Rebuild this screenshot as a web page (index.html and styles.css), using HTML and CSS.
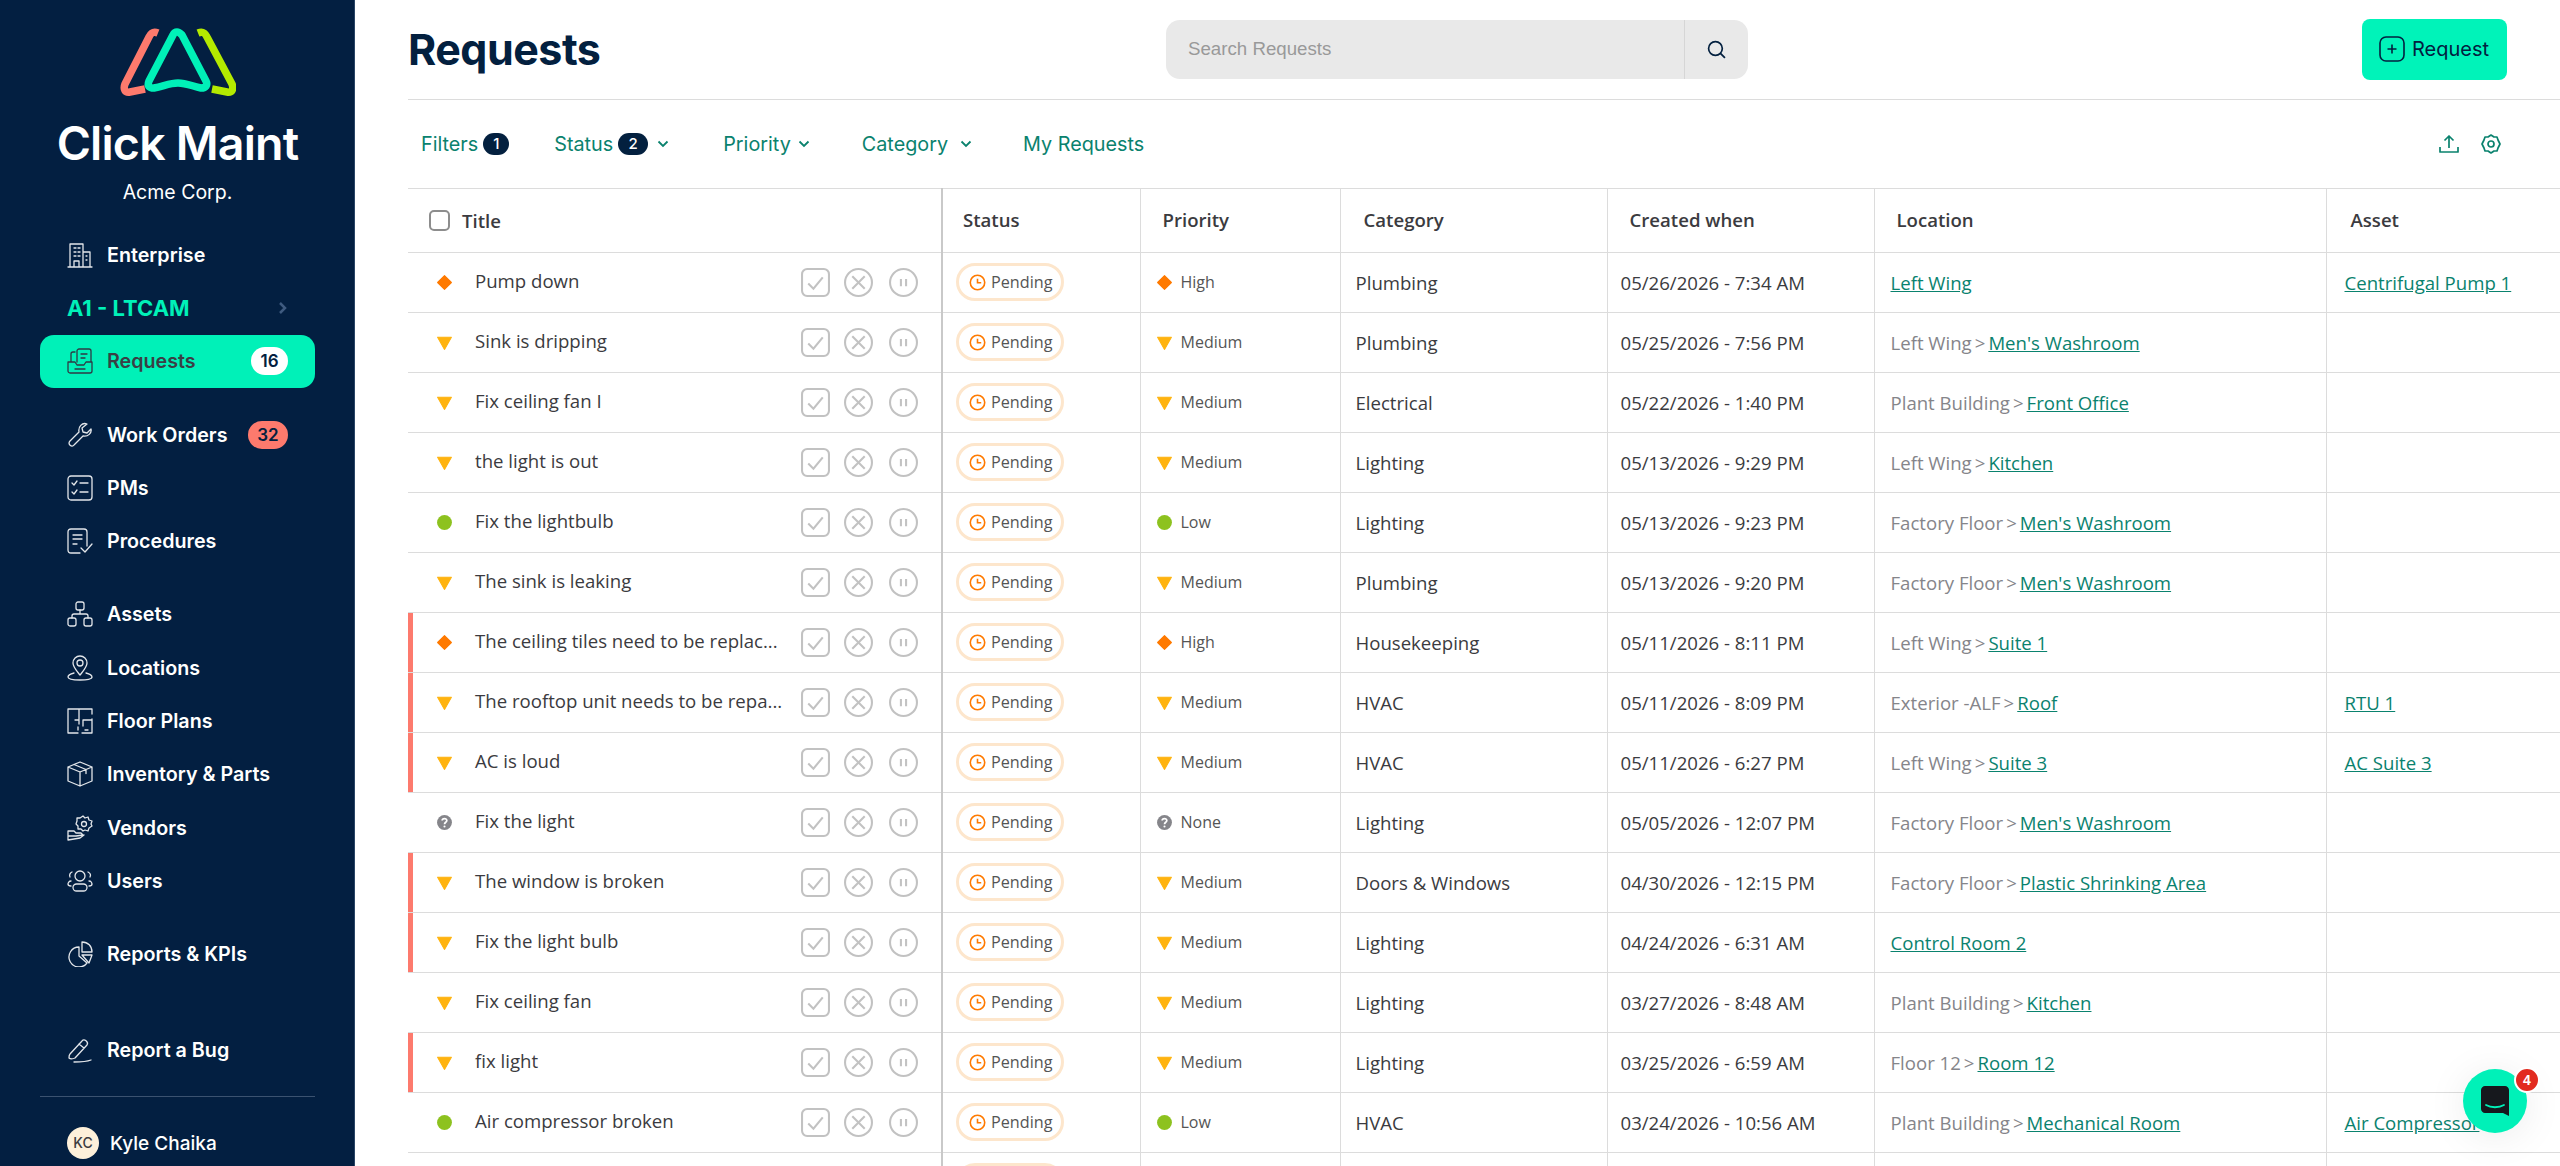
FILE: index.html
```html
<!DOCTYPE html>
<html lang="en">
<head>
  <meta charset="UTF-8">
  <meta name="viewport" content="width=device-width, initial-scale=1.0">
  <title>Requests - Click Maint</title>
  <link rel="stylesheet" href="styles.css">
</head>
<body>
  <svg class="sprites" width="0" height="0">
    <symbol id="i-check" viewBox="0 0 28 28"><rect x="1" y="1" width="26" height="26" rx="5"/><path d="M7 15l5 5 9-11"/></symbol>
    <symbol id="i-cross" viewBox="0 0 28 28"><circle cx="14" cy="14" r="13"/><path d="M8 8l12 12M20 8L8 20"/></symbol>
    <symbol id="i-pause" viewBox="0 0 28 28"><circle cx="14" cy="14" r="13"/><path d="M11.5 10.5v7M16.5 10.5v7"/></symbol>
    <symbol id="i-clock" viewBox="0 0 16 16"><circle cx="8" cy="8" r="6.8"/><path d="M8 4.5V8.3H11.5"/></symbol>
    <symbol id="p-high" viewBox="0 0 16 16"><path d="M8 1.5l6.5 6.5L8 14.5 1.500 8z" fill="#ff7a00" stroke="#ff7a00" stroke-linejoin="round"/></symbol>
    <symbol id="p-medium" viewBox="0 0 16 16"><path d="M1.500 3h13L8 14.500z" fill="#ffb30f" stroke="#ffb30f" stroke-linejoin="round"/></symbol>
    <symbol id="p-low" viewBox="0 0 16 16"><circle cx="8" cy="8" r="7" fill="#8dc21f"/></symbol>
    <symbol id="p-none" viewBox="0 0 16 16"><circle cx="8" cy="8" r="7" fill="#85858a"/><path d="M5.800 6.200C5.900 3.700 10.200 3.700 10.200 6.200 10.200 7.800 8 7.800 8 9.600" fill="none" stroke="#fff" stroke-width="1.600"/><circle cx="8" cy="11.800" r="1" fill="#fff"/></symbol>
  </svg>

  <div class="app">
    <aside class="sidebar">
      <div class="brand">
        <svg class="logo" viewBox="0 0 116 72" fill="none" stroke-width="7.500" stroke-linecap="round" stroke-linejoin="round">
          <path d="M38 7C33 5 31 7 29 11L5 58C3 63 5 67 10 66L25 63" stroke="#fd7a6d" stroke-linecap="butt"/>
          <path d="M57 6C55 6 54 7 53 9L29 55C27 60 29 62 34 62 44 60 50 57 58 57 66 57 72 60 81 62 86 62 88 59 86 55L62 9C60 7 59 6 57 6Z" stroke="#00f1b8"/>
          <path d="M78 7C83 5 85 7 87 11L112 58C114 63 112 67 107 66L92 63" stroke="#b4ea00" stroke-linecap="butt"/>
        </svg>
        <div class="brand-name">Click Maint</div>
        <div class="brand-org">Acme Corp.</div>
      </div>

      <nav class="nav">
        <a class="nav-item">
          <svg class="nav-icon" viewBox="0 0 26 26"><path d="M1 25h24M3 25V2h13v23M16 10h7v15M7 6h2M11 6h2M7 10h2M11 10h2M7 14h2M11 14h2M7 25v-6h5v6M19 14h1M19 18h1"/></svg>
          <span>Enterprise</span>
        </a>
        <a class="nav-site">
          <span>A1 - LTCAM</span>
          <svg class="nav-chevron" viewBox="0 0 10 14"><path d="M2 2l5 5-5 5"/></svg>
        </a>
        <a class="nav-item active">
          <svg class="nav-icon" viewBox="0 0 26 26"><path d="M4 13V6c0-1 1-2 2-2h2M10 14V3c0-1 1-2 2-2h10c1 0 2 1 2 2v11M14 6h6M14 10h4M1 14h7l2 3h7l2-3h6v9c0 1-1 2-2 2H3c-1 0-2-1-2-2zM8 21h10"/></svg>
          <span>Requests</span>
          <b class="count count-white">16</b>
        </a>

        <a class="nav-item group">
          <svg class="nav-icon" viewBox="0 0 26 26"><path d="M24 7c1 4-3 8-8 7L7 23c-2 3-7-1-4-4l9-9C11 5 15 0 20 2l-5 4 1 4 4 1z"/></svg>
          <span>Work Orders</span>
          <b class="count count-red">32</b>
        </a>
        <a class="nav-item">
          <svg class="nav-icon" viewBox="0 0 26 26"><rect x="1" y="1" width="24" height="24" rx="3"/><path d="M5 8l2 2 3-4M5 17l2 2 3-4M13 8h8M13 17h8"/></svg>
          <span>PMs</span>
        </a>
        <a class="nav-item">
          <svg class="nav-icon" viewBox="0 0 26 26"><path d="M13 25H4c-2 0-3-1-3-3V4c0-2 1-3 3-3h13c2 0 3 1 3 3v14M6 7h9M6 11h9M6 16h4M14 20l4 4 7-8"/></svg>
          <span>Procedures</span>
        </a>

        <a class="nav-item group">
          <svg class="nav-icon" viewBox="0 0 26 26"><rect x="9" y="1" width="8" height="8" rx="2"/><rect x="1" y="17" width="8" height="8" rx="2"/><rect x="17" y="17" width="8" height="8" rx="2"/><path d="M13 9v4M5 17v-2c0-1 1-2 2-2h12c1 0 2 1 2 2v2"/></svg>
          <span>Assets</span>
        </a>
        <a class="nav-item">
          <svg class="nav-icon" viewBox="0 0 26 26"><path d="M13 20C9 15 6 12 6 8a7 7 0 0 1 14 0c0 4-3 7-7 12z"/><circle cx="13" cy="8" r="3"/><path d="M7 18c-4 1-6 2-6 4 0 2 5 3 12 3s12-1 12-3c0-2-2-3-6-4"/></svg>
          <span>Locations</span>
        </a>
        <a class="nav-item">
          <svg class="nav-icon" viewBox="0 0 26 26"><path d="M25 6V1H1v24h10M15 25h10V11M12 1v11H8M12 12v4M16 12h9M16 12v6M11 19v3M18 22h3"/></svg>
          <span>Floor Plans</span>
        </a>
        <a class="nav-item">
          <svg class="nav-icon" viewBox="0 0 26 26"><path d="M13 1l12 5v14l-12 5-12-5V6zM1 6l12 5 12-5M13 11v14M7 3.500l12 5v4"/></svg>
          <span>Inventory &amp; Parts</span>
        </a>
        <a class="nav-item">
          <svg class="nav-icon" viewBox="0 0 26 26"><path d="M16 1l2 2 3-1 1 3 3 1-1 3 1 2-3 2-1 3-3-1-2 1-2-2-3 0 0-3-2-2 1-3 0-3 3 0z"/><circle cx="17" cy="9" r="2.500"/><path d="M1 25V16h6l2 2h5l2 2-7 1H1M1 25l12-2 4-3"/></svg>
          <span>Vendors</span>
        </a>
        <a class="nav-item">
          <svg class="nav-icon" viewBox="0 0 26 26"><circle cx="13" cy="8" r="5"/><rect x="6" y="16" width="14" height="7" rx="3.500"/><path d="M5 4C3 5 2 7 3 9M21 4c2 1 3 3 2 5M4 13c-2 0-3 2-3 3s1 2 3 2M22 13c2 0 3 2 3 3s-1 2-3 2"/></svg>
          <span>Users</span>
        </a>

        <a class="nav-item group">
          <svg class="nav-icon" viewBox="0 0 26 26"><path d="M12 6a10 10 0 1 0 8 16l-8-7zM15 1v10h10C25 5 21 1 15 1zM15 14h10l-3 8z"/></svg>
          <span>Reports &amp; KPIs</span>
        </a>

        <a class="nav-item group-wide">
          <svg class="nav-icon" viewBox="0 0 26 26"><path d="M3 17L15 4c2-3 7 1 5 4L8 21c-2 1-5 1-6 0 0-1 0-3 1-4zM12 7l5 4"/><path d="M7 25c6 0 12 0 17-2"/></svg>
          <span>Report a Bug</span>
        </a>
      </nav>

      <div class="profile">
        <span class="avatar">KC</span>
        <span>Kyle Chaika</span>
      </div>
    </aside>

    <main class="main">
      <header class="topbar">
        <h1>Requests</h1>
        <div class="search">
          <input type="text" placeholder="Search Requests">
          <span class="search-btn">
            <svg viewBox="0 0 18 18" width="19" height="19" fill="none" stroke="#03203f" stroke-width="1.600"><circle cx="8" cy="8" r="6.500"/><path d="M12.500 12.500L17 17"/></svg>
          </span>
        </div>
        <button class="add-btn">
          <svg viewBox="0 0 26 26" width="26" height="26" fill="none" stroke="#03203f" stroke-width="1.600"><rect x="1" y="1" width="24" height="24" rx="6"/><path d="M13 8.500v9M8.500 13h9"/></svg>
          Request
        </button>
      </header>

      <div class="filters">
        <span class="filter">Filters <b class="pill">1</b></span>
        <span class="filter f-status">Status <b class="pill pill-wide">2</b><svg class="caret" viewBox="0 0 12 8"><path d="M1.500 1.500L6 6l4.500-4.500"/></svg></span>
        <span class="filter f-priority">Priority<svg class="caret" viewBox="0 0 12 8"><path d="M1.500 1.500L6 6l4.500-4.500"/></svg></span>
        <span class="filter f-category">Category<svg class="caret" viewBox="0 0 12 8"><path d="M1.500 1.500L6 6l4.500-4.500"/></svg></span>
        <span class="filter f-mine">My Requests</span>
        <span class="filter-tools">
          <svg viewBox="0 0 20 20" width="20" height="20"><path d="M1 13v5h18v-5M10 14V2M5.500 6.500L10 2l4.500 4.500"/></svg>
          <svg viewBox="0 0 20 20" width="20" height="20"><path d="M10 1l3 2h3l1 3 2 4-2 4-1 3h-3l-3 2-3-2H4l-1-3-2-4 2-4 1-3h3z"/><circle cx="10" cy="10" r="3"/></svg>
        </span>
      </div>

      <table class="grid">
        <colgroup>
          <col class="c-title"><col class="c-status"><col class="c-priority"><col class="c-category"><col class="c-created"><col class="c-location"><col class="c-asset">
        </colgroup>
        <thead>
          <tr>
            <th class="title-cell"><span class="head-title"><i class="checkbox"></i>Title</span></th>
            <th>Status</th><th>Priority</th><th>Category</th><th>Created when</th><th>Location</th><th>Asset</th>
          </tr>
        </thead>
        <tbody>
          <tr>
            <td class="title-cell"><div class="title-wrap"><svg class="prio"><use href="#p-high"/></svg><span class="title-text">Pump down</span><span class="acts"><svg><use href="#i-check"/></svg><svg><use href="#i-cross"/></svg><svg><use href="#i-pause"/></svg></span></div></td>
            <td><span class="status"><svg><use href="#i-clock"/></svg>Pending</span></td>
            <td><span class="priority"><svg><use href="#p-high"/></svg>High</span></td>
            <td>Plumbing</td><td>05/26/2026 - 7:34 AM</td>
            <td><a class="link">Left Wing</a></td><td><a class="link">Centrifugal Pump 1</a></td>
          </tr>
          <tr>
            <td class="title-cell"><div class="title-wrap"><svg class="prio"><use href="#p-medium"/></svg><span class="title-text">Sink is dripping</span><span class="acts"><svg><use href="#i-check"/></svg><svg><use href="#i-cross"/></svg><svg><use href="#i-pause"/></svg></span></div></td>
            <td><span class="status"><svg><use href="#i-clock"/></svg>Pending</span></td>
            <td><span class="priority"><svg><use href="#p-medium"/></svg>Medium</span></td>
            <td>Plumbing</td><td>05/25/2026 - 7:56 PM</td>
            <td><span class="parent">Left Wing<i class="sep">&gt;</i></span><a class="link">Men's Washroom</a></td><td></td>
          </tr>
          <tr>
            <td class="title-cell"><div class="title-wrap"><svg class="prio"><use href="#p-medium"/></svg><span class="title-text">Fix ceiling fan I</span><span class="acts"><svg><use href="#i-check"/></svg><svg><use href="#i-cross"/></svg><svg><use href="#i-pause"/></svg></span></div></td>
            <td><span class="status"><svg><use href="#i-clock"/></svg>Pending</span></td>
            <td><span class="priority"><svg><use href="#p-medium"/></svg>Medium</span></td>
            <td>Electrical</td><td>05/22/2026 - 1:40 PM</td>
            <td><span class="parent">Plant Building<i class="sep">&gt;</i></span><a class="link">Front Office</a></td><td></td>
          </tr>
          <tr>
            <td class="title-cell"><div class="title-wrap"><svg class="prio"><use href="#p-medium"/></svg><span class="title-text">the light is out</span><span class="acts"><svg><use href="#i-check"/></svg><svg><use href="#i-cross"/></svg><svg><use href="#i-pause"/></svg></span></div></td>
            <td><span class="status"><svg><use href="#i-clock"/></svg>Pending</span></td>
            <td><span class="priority"><svg><use href="#p-medium"/></svg>Medium</span></td>
            <td>Lighting</td><td>05/13/2026 - 9:29 PM</td>
            <td><span class="parent">Left Wing<i class="sep">&gt;</i></span><a class="link">Kitchen</a></td><td></td>
          </tr>
          <tr>
            <td class="title-cell"><div class="title-wrap"><svg class="prio"><use href="#p-low"/></svg><span class="title-text">Fix the lightbulb</span><span class="acts"><svg><use href="#i-check"/></svg><svg><use href="#i-cross"/></svg><svg><use href="#i-pause"/></svg></span></div></td>
            <td><span class="status"><svg><use href="#i-clock"/></svg>Pending</span></td>
            <td><span class="priority"><svg><use href="#p-low"/></svg>Low</span></td>
            <td>Lighting</td><td>05/13/2026 - 9:23 PM</td>
            <td><span class="parent">Factory Floor<i class="sep">&gt;</i></span><a class="link">Men's Washroom</a></td><td></td>
          </tr>
          <tr>
            <td class="title-cell"><div class="title-wrap"><svg class="prio"><use href="#p-medium"/></svg><span class="title-text">The sink is leaking</span><span class="acts"><svg><use href="#i-check"/></svg><svg><use href="#i-cross"/></svg><svg><use href="#i-pause"/></svg></span></div></td>
            <td><span class="status"><svg><use href="#i-clock"/></svg>Pending</span></td>
            <td><span class="priority"><svg><use href="#p-medium"/></svg>Medium</span></td>
            <td>Plumbing</td><td>05/13/2026 - 9:20 PM</td>
            <td><span class="parent">Factory Floor<i class="sep">&gt;</i></span><a class="link">Men's Washroom</a></td><td></td>
          </tr>
          <tr class="flagged">
            <td class="title-cell"><div class="title-wrap"><svg class="prio"><use href="#p-high"/></svg><span class="title-text">The ceiling tiles need to be replac...</span><span class="acts"><svg><use href="#i-check"/></svg><svg><use href="#i-cross"/></svg><svg><use href="#i-pause"/></svg></span></div></td>
            <td><span class="status"><svg><use href="#i-clock"/></svg>Pending</span></td>
            <td><span class="priority"><svg><use href="#p-high"/></svg>High</span></td>
            <td>Housekeeping</td><td>05/11/2026 - 8:11 PM</td>
            <td><span class="parent">Left Wing<i class="sep">&gt;</i></span><a class="link">Suite 1</a></td><td></td>
          </tr>
          <tr class="flagged">
            <td class="title-cell"><div class="title-wrap"><svg class="prio"><use href="#p-medium"/></svg><span class="title-text">The rooftop unit needs to be repa...</span><span class="acts"><svg><use href="#i-check"/></svg><svg><use href="#i-cross"/></svg><svg><use href="#i-pause"/></svg></span></div></td>
            <td><span class="status"><svg><use href="#i-clock"/></svg>Pending</span></td>
            <td><span class="priority"><svg><use href="#p-medium"/></svg>Medium</span></td>
            <td>HVAC</td><td>05/11/2026 - 8:09 PM</td>
            <td><span class="parent">Exterior -ALF<i class="sep">&gt;</i></span><a class="link">Roof</a></td><td><a class="link">RTU 1</a></td>
          </tr>
          <tr class="flagged">
            <td class="title-cell"><div class="title-wrap"><svg class="prio"><use href="#p-medium"/></svg><span class="title-text">AC is loud</span><span class="acts"><svg><use href="#i-check"/></svg><svg><use href="#i-cross"/></svg><svg><use href="#i-pause"/></svg></span></div></td>
            <td><span class="status"><svg><use href="#i-clock"/></svg>Pending</span></td>
            <td><span class="priority"><svg><use href="#p-medium"/></svg>Medium</span></td>
            <td>HVAC</td><td>05/11/2026 - 6:27 PM</td>
            <td><span class="parent">Left Wing<i class="sep">&gt;</i></span><a class="link">Suite 3</a></td><td><a class="link">AC Suite 3</a></td>
          </tr>
          <tr>
            <td class="title-cell"><div class="title-wrap"><svg class="prio"><use href="#p-none"/></svg><span class="title-text">Fix the light</span><span class="acts"><svg><use href="#i-check"/></svg><svg><use href="#i-cross"/></svg><svg><use href="#i-pause"/></svg></span></div></td>
            <td><span class="status"><svg><use href="#i-clock"/></svg>Pending</span></td>
            <td><span class="priority"><svg><use href="#p-none"/></svg>None</span></td>
            <td>Lighting</td><td>05/05/2026 - 12:07 PM</td>
            <td><span class="parent">Factory Floor<i class="sep">&gt;</i></span><a class="link">Men's Washroom</a></td><td></td>
          </tr>
          <tr class="flagged">
            <td class="title-cell"><div class="title-wrap"><svg class="prio"><use href="#p-medium"/></svg><span class="title-text">The window is broken</span><span class="acts"><svg><use href="#i-check"/></svg><svg><use href="#i-cross"/></svg><svg><use href="#i-pause"/></svg></span></div></td>
            <td><span class="status"><svg><use href="#i-clock"/></svg>Pending</span></td>
            <td><span class="priority"><svg><use href="#p-medium"/></svg>Medium</span></td>
            <td>Doors &amp; Windows</td><td>04/30/2026 - 12:15 PM</td>
            <td><span class="parent">Factory Floor<i class="sep">&gt;</i></span><a class="link">Plastic Shrinking Area</a></td><td></td>
          </tr>
          <tr class="flagged">
            <td class="title-cell"><div class="title-wrap"><svg class="prio"><use href="#p-medium"/></svg><span class="title-text">Fix the light bulb</span><span class="acts"><svg><use href="#i-check"/></svg><svg><use href="#i-cross"/></svg><svg><use href="#i-pause"/></svg></span></div></td>
            <td><span class="status"><svg><use href="#i-clock"/></svg>Pending</span></td>
            <td><span class="priority"><svg><use href="#p-medium"/></svg>Medium</span></td>
            <td>Lighting</td><td>04/24/2026 - 6:31 AM</td>
            <td><a class="link">Control Room 2</a></td><td></td>
          </tr>
          <tr>
            <td class="title-cell"><div class="title-wrap"><svg class="prio"><use href="#p-medium"/></svg><span class="title-text">Fix ceiling fan</span><span class="acts"><svg><use href="#i-check"/></svg><svg><use href="#i-cross"/></svg><svg><use href="#i-pause"/></svg></span></div></td>
            <td><span class="status"><svg><use href="#i-clock"/></svg>Pending</span></td>
            <td><span class="priority"><svg><use href="#p-medium"/></svg>Medium</span></td>
            <td>Lighting</td><td>03/27/2026 - 8:48 AM</td>
            <td><span class="parent">Plant Building<i class="sep">&gt;</i></span><a class="link">Kitchen</a></td><td></td>
          </tr>
          <tr class="flagged">
            <td class="title-cell"><div class="title-wrap"><svg class="prio"><use href="#p-medium"/></svg><span class="title-text">fix light</span><span class="acts"><svg><use href="#i-check"/></svg><svg><use href="#i-cross"/></svg><svg><use href="#i-pause"/></svg></span></div></td>
            <td><span class="status"><svg><use href="#i-clock"/></svg>Pending</span></td>
            <td><span class="priority"><svg><use href="#p-medium"/></svg>Medium</span></td>
            <td>Lighting</td><td>03/25/2026 - 6:59 AM</td>
            <td><span class="parent">Floor 12<i class="sep">&gt;</i></span><a class="link">Room 12</a></td><td></td>
          </tr>
          <tr>
            <td class="title-cell"><div class="title-wrap"><svg class="prio"><use href="#p-low"/></svg><span class="title-text">Air compressor broken</span><span class="acts"><svg><use href="#i-check"/></svg><svg><use href="#i-cross"/></svg><svg><use href="#i-pause"/></svg></span></div></td>
            <td><span class="status"><svg><use href="#i-clock"/></svg>Pending</span></td>
            <td><span class="priority"><svg><use href="#p-low"/></svg>Low</span></td>
            <td>HVAC</td><td>03/24/2026 - 10:56 AM</td>
            <td><span class="parent">Plant Building<i class="sep">&gt;</i></span><a class="link">Mechanical Room</a></td><td><a class="link">Air Compressor</a></td>
          </tr>
          <tr>
            <td class="title-cell"></td>
            <td><span class="status status-empty"></span></td>
            <td></td><td></td><td></td><td></td><td></td>
          </tr>
        </tbody>
      </table>
    </main>
  </div>

  <div class="chat">
    <svg viewBox="0 0 28 30" width="28" height="30"><path d="M4 0h20c2 0 4 2 4 4v26l-6-3H4c-2 0-4-2-4-4V4c0-2 2-4 4-4z" fill="#16181d"/><path d="M5 19c5 3 13 3 18 0" fill="none" stroke="#00f1b8" stroke-width="1.800" stroke-linecap="round"/></svg>
    <span class="chat-badge">4</span>
  </div>
</body>
</html>
```

FILE: styles.css
```css
* { box-sizing: border-box; }

html, body {
  margin: 0;
  height: 100%;
  overflow: hidden;
}
body {
  font-family: 'Open Sans', sans-serif;
  color: #3b3b40;
  background: #fff;
}
.sprites { position: absolute; }

.app {
  display: flex;
  height: 100vh;
}

/* sidebar */
.sidebar {
  width: 355px;
  flex: none;
  background: #031f41;
  border-right: 1px solid #2a4566;
  padding: 0 39px 0 40px;
  font-family: Inter, 'Noto Sans', sans-serif;
  color: #fff;
  overflow: hidden;
}
.brand {
  padding-top: 26px;
  height: 228px;
  text-align: center;
}
.logo {
  display: block;
  width: 116px;
  height: 72px;
  margin: 0 auto;
}
.brand-name {
  margin-top: 17px;
  font-size: 46.500px;
  line-height: 56px;
  font-weight: 600;
  letter-spacing: -0.8px;
}
.brand-org {
  margin-top: 8px;
  font-size: 19.500px;
  line-height: 26px;
}
.nav-item, .nav-site {
  display: flex;
  align-items: center;
  height: 53.3px;
  padding: 0 27px;
  font-size: 19.700px;
  font-weight: 600;
}
.nav-site {
  justify-content: space-between;
  font-size: 22px;
  font-weight: 700;
  color: #00f1b8;
}
.nav-chevron {
  width: 10px;
  height: 14px;
  fill: none;
  stroke: #3f5b80;
  stroke-width: 2.500;
}
.nav-icon {
  width: 26px;
  height: 26px;
  flex: none;
  margin-right: 14px;
  fill: none;
  stroke: #e3e6ea;
  stroke-width: 1.300;
  stroke-linecap: round;
  stroke-linejoin: round;
}
.nav-item.active {
  background: #00f1b8;
  color: #3a3f45;
  border-radius: 14px;
}
.nav-item.active .nav-icon { stroke: #2f3a44; }
.group { margin-top: 20px; }
.group-wide { margin-top: 42px; }
.count {
  margin-left: auto;
  height: 28px;
  line-height: 28px;
  border-radius: 14px;
  text-align: center;
  font-size: 17px;
  font-weight: 600;
}
.count-white {
  width: 37px;
  background: #fff;
  color: #03203f;
}
.count-red {
  width: 40px;
  background: #fd7a6d;
  color: #03203f;
}
.profile {
  display: flex;
  align-items: center;
  gap: 11px;
  margin-top: 20px;
  padding: 30px 27px 0;
  border-top: 1px solid #3b5270;
  font-size: 19px;
  font-weight: 500;
}
.avatar {
  width: 32px;
  height: 32px;
  border-radius: 50%;
  background: #fdf0da;
  color: #3b3b40;
  font-size: 14px;
  line-height: 32px;
  text-align: center;
}

/* top bar and filters */
.main {
  flex: 1;
  min-width: 0;
  padding-left: 53px;
  overflow: hidden;
}
.topbar {
  display: flex;
  align-items: center;
  height: 100px;
  border-bottom: 1px solid #dcdcdc;
  padding-bottom: 1px;
}
h1 {
  margin: 0;
  width: 758px;
  font-family: Inter, sans-serif;
  font-size: 43px;
  font-weight: 700;
  letter-spacing: -0.5px;
  color: #03203f;
}
.search {
  display: flex;
  width: 582px;
  height: 59px;
  background: #e9e9e9;
  border-radius: 14px;
}
.search input {
  flex: 1;
  min-width: 0;
  border: none;
  outline: none;
  background: transparent;
  padding: 0 22px;
  font-family: 'Liberation Sans', sans-serif;
  font-size: 18.700px;
}
.search input::placeholder { color: #999; opacity: 1; }
.search-btn {
  display: flex;
  align-items: center;
  justify-content: center;
  width: 64px;
  border-left: 1px solid #d6d6d6;
}
.add-btn {
  display: flex;
  align-items: center;
  gap: 7px;
  width: 145px;
  height: 61px;
  margin-left: 614px;
  padding: 0 17px;
  border: none;
  border-radius: 8px;
  background: #00f3b9;
  font-family: Inter, sans-serif;
  font-size: 20px;
  color: #03203f;
  white-space: nowrap;
}

.filters {
  display: flex;
  align-items: center;
  height: 88px;
  padding-left: 13px;
  font-family: Inter, sans-serif;
  font-size: 19.800px;
  color: #0a826e;
}
.filter {
  display: flex;
  align-items: center;
  gap: 5px;
  white-space: nowrap;
}
.f-status { margin-left: 45px; }
.f-priority { margin-left: 54px; }
.f-category { margin-left: 52px; }
.f-mine { margin-left: 51px; }
.pill {
  min-width: 26px;
  height: 22px;
  line-height: 22px;
  border-radius: 11px;
  background: #03203f;
  color: #fff;
  text-align: center;
  font-size: 15px;
  font-weight: 500;
}
.pill-wide { min-width: 30px; }
.caret {
  width: 12px;
  height: 8px;
  margin-left: 4px;
  fill: none;
  stroke: #0a826e;
  stroke-width: 1.800;
}
.f-priority .caret { margin-left: 2px; }
.f-category .caret { margin-left: 7px; }
.filter-tools {
  display: flex;
  gap: 22px;
  margin-left: auto;
  margin-right: 59px;
}
.filter-tools svg {
  fill: none;
  stroke: #0a826e;
  stroke-width: 1.700;
  stroke-linejoin: round;
}

/* table */
.grid {
  width: 2152px;
  table-layout: fixed;
  border-collapse: collapse;
  font-size: 18.600px;
}
.c-title { width: 534px; }
.c-status { width: 198px; }
.c-priority { width: 200px; }
.c-category { width: 267px; }
.c-created { width: 267px; }
.c-location { width: 452px; }
.c-asset { width: 234px; }

.grid th, .grid td {
  height: 60px;
  padding: 0 0 1px 13px;
  border: 1px solid #dcdcdc;
  border-left-width: 0;
  text-align: left;
  white-space: nowrap;
  overflow: hidden;
}
.grid th:last-child, .grid td:last-child { border-right: none; }
.grid td:nth-child(4) { padding-left: 15px; }
.grid td:nth-child(6) { padding-left: 16px; }
.grid td:nth-child(7) { padding-left: 18px; }
.grid th {
  height: 64px;
  padding: 0 0 2px 20px;
  font-weight: 600;
  color: #3b3b40;
}
.grid th:nth-child(3) { padding-left: 22px; }
.grid th:nth-child(4) { padding-left: 23px; }
.grid th:nth-child(5) { padding-left: 22px; }
.grid th:nth-child(6) { padding-left: 22px; }
.grid th:nth-child(7) { padding-left: 24px; }
.grid .title-cell {
  padding: 0;
  border-right: 2px solid #c9c9c9;
  box-shadow: 3px 0 4px rgba(0, 0, 0, 0.14);
  position: relative;
}
.head-title {
  display: flex;
  align-items: center;
  gap: 12px;
  padding-left: 21px;
}
.checkbox {
  width: 21px;
  height: 21px;
  border: 2px solid #8d8d8d;
  border-radius: 5px;
}
.title-wrap {
  display: flex;
  align-items: center;
  padding-left: 28px;
}
.flagged .title-cell { box-shadow: inset 5px 0 0 #fd7a6d, 3px 0 4px rgba(0, 0, 0, 0.14); }
.prio {
  width: 17px;
  height: 17px;
  flex: none;
}
.title-text {
  margin-left: 22px;
  margin-top: -5px;
  color: #3b3b40;
}
.acts {
  display: flex;
  gap: 16px;
  margin-left: auto;
  margin-right: 23px;
}
.acts svg {
  width: 29px;
  height: 29px;
  fill: none;
  stroke: #c2c2c2;
  stroke-width: 2;
}
.acts svg:first-child { margin-right: -2px; }
.status {
  display: inline-flex;
  align-items: center;
  height: 38px;
  padding: 0 9px 0 10px;
  gap: 5px;
  border: 3px solid #fde6cc;
  border-radius: 19px;
  font-size: 16.200px;
  color: #555;
  vertical-align: middle;
}
.status-empty { width: 108px; }
.status svg {
  width: 17px;
  height: 17px;
  fill: none;
  stroke: #ff7a00;
  stroke-width: 1.500;
}
.priority {
  display: flex;
  align-items: center;
  gap: 8px;
  padding-left: 2px;
  font-size: 16px;
  color: #555;
}
.priority svg {
  width: 17px;
  height: 17px;
}
.parent { color: #85858a; }
.sep {
  margin: 0 3px;
  font-style: normal;
}
.link {
  color: #0a826e;
  text-decoration: underline;
}

/* chat launcher */
.chat {
  position: fixed;
  left: 2463px;
  top: 1069px;
  width: 64px;
  height: 64px;
  border-radius: 50%;
  background: #00f1b8;
  box-shadow: 0 4px 40px rgba(0, 0, 0, 0.08);
  display: flex;
  align-items: center;
  justify-content: center;
}
.chat-badge {
  position: absolute;
  top: -2px;
  right: -13px;
  width: 26px;
  height: 26px;
  border: 2px solid #fff;
  border-radius: 50%;
  background: #e22b20;
  color: #fff;
  font-family: 'Liberation Sans', sans-serif;
  font-size: 14px;
  font-weight: 700;
  line-height: 22px;
  text-align: center;
}
```
